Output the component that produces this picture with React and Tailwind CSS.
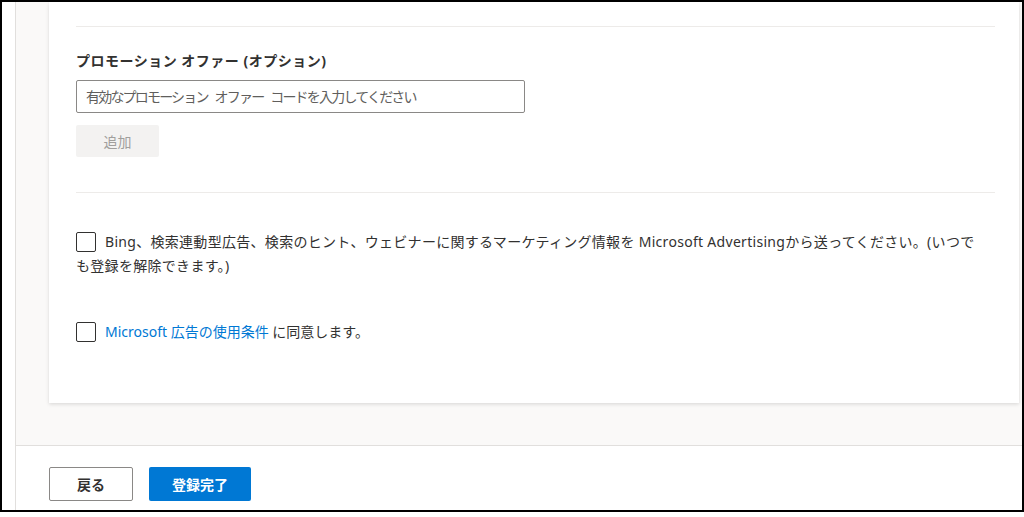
import React from "react";

function Checkbox() {
  return (
    <span className="inline-block w-5 h-5 align-[-5px] mr-[9px] border-[1.5px] border-[#323130] rounded-[2px] bg-white" />
  );
}

export default function App() {
  return (
    <div
      className="w-[1024px] h-[517px] bg-white overflow-hidden"
      style={{ fontFamily: '"Noto Sans", "Noto Sans CJK JP", sans-serif' }}
    >
      <div className="w-[1024px] h-[512px] border-2 border-black flex overflow-hidden">
        {/* left strip */}
        <div className="w-[13px] shrink-0 bg-white" />

        <div className="flex-1 flex flex-col border-l border-[#e1dfdd] min-w-0">
          {/* gray scroll area */}
          <div className="h-[443px] shrink-0 bg-[#faf9f8] pl-[33px] pr-[3px] flex flex-col">
            <div className="bg-white h-[401px] shadow-[0_1.6px_3.6px_rgba(0,0,0,0.13),0_0.3px_0.9px_rgba(0,0,0,0.11)] pl-[27px] pr-[24px] pt-[24px] text-[#323130] text-[14px]">
              <div className="border-t border-[#edebe9]" />

              <div className="pt-[24px]">
                <div className="font-bold leading-5 text-[14px] tracking-[0.5px]">
                  プロモーション オファー (オプション)
                </div>
                <input
                  type="text"
                  placeholder="有効なプロモーション オファー コードを入力してください"
                  className="mt-[9px] block w-[449px] h-[33px] border border-[#8a8886] rounded-[2px] px-[9px] text-[14px] tracking-[-1.8px] [word-spacing:5px] placeholder:text-[#605e5c] outline-none"
                />
                <button className="mt-[12px] w-[83px] h-[32px] bg-[#f3f2f1] text-[#a19f9d] text-[14px] rounded-[2px]">
                  追加
                </button>
              </div>

              <div className="mt-[35px] border-t border-[#edebe9]" />

              <p className="mt-[37px] leading-6 pr-[16px] tracking-[0.3px]">
                <Checkbox />
                Bing、検索連動型広告、検索のヒント、ウェビナーに関するマーケティング情報を Microsoft Advertisingから送ってください。(いつでも登録を解除できます。)
              </p>

              <p className="mt-[42px] leading-6">
                <Checkbox />
                <a className="text-[#0078d4]">Microsoft 広告の使用条件</a> に同意します。
              </p>
            </div>
          </div>

          {/* footer */}
          <div className="flex-1 border-t border-[#e1dfdd] bg-white pl-[33px] pt-[21px] flex gap-[16px] items-start">
            <button className="w-[84px] h-[34px] border border-[#8a8886] rounded-[2px] bg-white text-[#323130] text-[14px] font-bold">
              戻る
            </button>
            <button className="w-[102px] h-[34px] rounded-[2px] bg-[#0078d4] text-white text-[14px] font-bold">
              登録完了
            </button>
          </div>
        </div>
      </div>
    </div>
  );
}
